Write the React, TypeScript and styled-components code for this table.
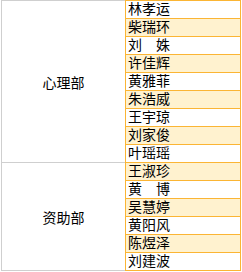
import React from 'react'
import styled, { createGlobalStyle } from 'styled-components'

const GlobalStyle = createGlobalStyle`
  html, body {
    margin: 0;
    padding: 0;
    background: #ffffff;
  }
  body {
    font-family: "Liberation Sans", "Noto Sans CJK SC", sans-serif;
    color: #000000;
  }
`

const groups = [
  {
    dept: '心理部',
    names: ['林孝运', '柴瑞环', '刘　姝', '许佳辉', '黄雅菲', '朱浩威', '王宇琼', '刘家俊', '叶瑶瑶'],
  },
  {
    dept: '资助部',
    names: ['王淑珍', '黄　博', '吴慧婷', '黄阳风', '陈煜泽', '刘建波'],
  },
]

const Sheet = styled.div`
  padding-left: 1px;
  width: 240px;
`

const Group = styled.div`
  display: grid;
  grid-template-columns: 124px 116px;
`

const DeptCell = styled.div<{ $first: boolean }>`
  display: flex;
  align-items: center;
  justify-content: center;
  border-left: 1px solid #cfcfcf;
  border-top: ${(p) => (p.$first ? '1px solid #cfcfcf' : 'none')};
  border-bottom: 1px solid #cfcfcf;
  font-size: 14px;
`

const NameList = styled.div`
  display: flex;
  flex-direction: column;
  border-left: 1px solid #fbb534;
  border-right: 1px solid #fbb534;
`

const NameRow = styled.div<{ $shaded: boolean; $first: boolean }>`
  height: 17px;
  line-height: 17px;
  padding-left: 2px;
  font-size: 14px;
  white-space: pre;
  background: ${(p) => (p.$shaded ? '#fff2cf' : '#ffffff')};
  border-top: ${(p) => (p.$first ? '1px solid #fbb534' : 'none')};
  border-bottom: 1px solid #fbb534;
`

export default function App() {
  let index = 0
  return (
    <>
      <GlobalStyle />
      <Sheet>
        {groups.map((g, gi) => (
          <Group key={g.dept}>
            <DeptCell $first={gi === 0}>{g.dept}</DeptCell>
            <NameList>
              {g.names.map((n) => {
                const i = index++
                return (
                  <NameRow key={n} $shaded={i % 2 === 1} $first={i === 0}>
                    {n}
                  </NameRow>
                )
              })}
            </NameList>
          </Group>
        ))}
      </Sheet>
    </>
  )
}
